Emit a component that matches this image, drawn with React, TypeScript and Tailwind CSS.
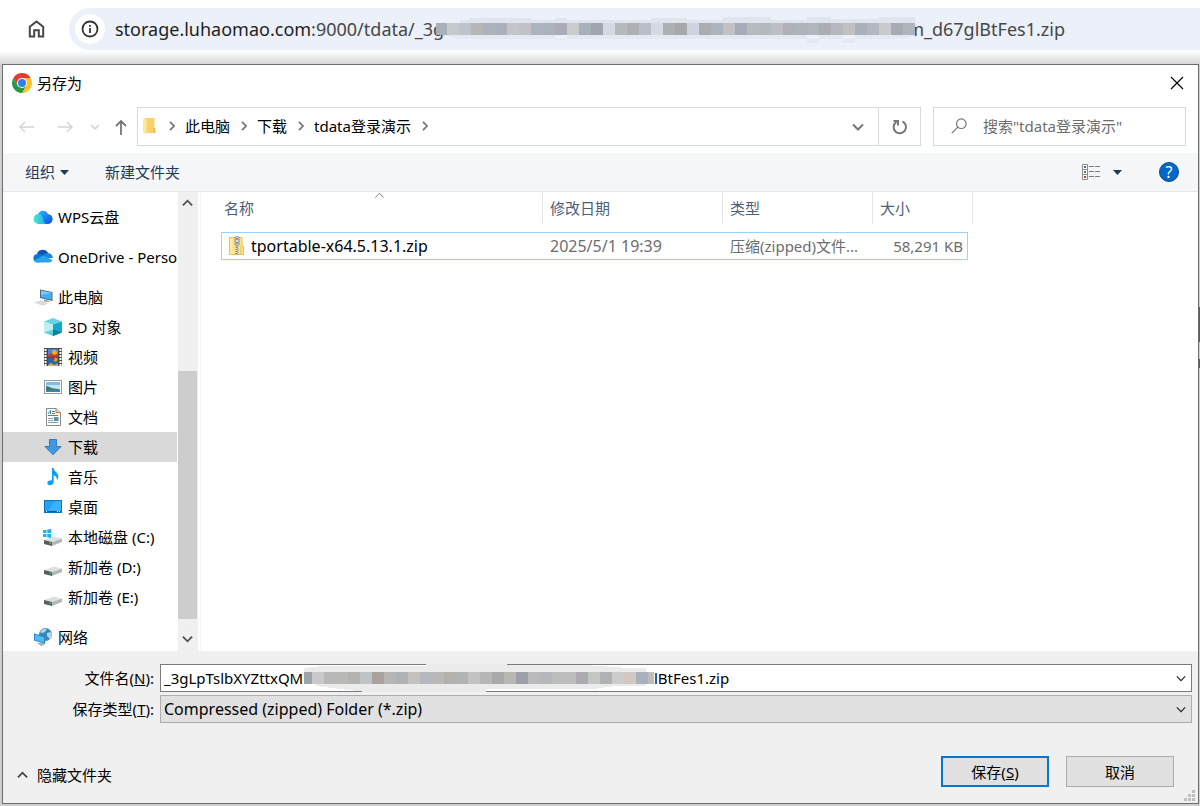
import { useState } from 'react';
import type { ReactNode } from 'react';

interface IconProps {
  className?: string;
}

interface TreeNode {
  label: string;
  icon: ReactNode;
  level: number;
  gap?: boolean;
}

interface MosaicProps {
  colors: string[];
  first: number;
  className?: string;
  children?: ReactNode;
}

function ChromeIcon() {
  return (
    <svg className="size-5 shrink-0" viewBox="0 0 20 20" aria-hidden="true">
      <path d="M1.34 5A10 10 0 0 1 18.66 5L10 5.2 5.67 12.5Z" fill="#e33b2e" />
      <path d="M18.66 5A10 10 0 0 1 10 20L14.33 12.5 10 5Z" fill="#fcc31e" />
      <path d="M1.34 5A10 10 0 0 0 10 20L14.33 12.5 5.67 12.5Z" fill="#279847" />
      <circle cx="10" cy="10" r="5" fill="#fff" />
      <circle cx="10" cy="10" r="4" fill="#2f7de9" />
    </svg>
  );
}

function Chevron({ className }: IconProps) {
  return (
    <svg className={className} viewBox="0 0 12 8" fill="none" stroke="currentColor" aria-hidden="true">
      <path d="M1 1.5 6 6.5 11 1.5" />
    </svg>
  );
}

function CrumbArrow() {
  return (
    <svg
      className="mr-[9px] ml-[10px] h-[10px] w-2 shrink-0 text-[#767676]"
      viewBox="0 0 8 10"
      fill="none"
      stroke="currentColor"
      strokeWidth="1.8"
      aria-hidden="true"
    >
      <path d="M2 .8 6 5 2 9.2" />
    </svg>
  );
}

function FolderIcon() {
  return (
    <svg className="ml-1 h-[18px] w-4 shrink-0" viewBox="0 0 16 18" aria-hidden="true">
      <path d="M2.5 1H12.5V10.5L13 11.5V16H2.5Z" fill="#f7d26b" />
      <path d="M1 1.5 4.5 2.5V17.5L1 15.5Z" fill="#ffe79e" />
      <path d="M11.5 10.5 13.5 11.5V16H11.5Z" fill="#e9bb4c" />
    </svg>
  );
}

function ZipIcon() {
  return (
    <svg className="mr-[6px] h-5 w-4 shrink-0" viewBox="0 0 16 20" aria-hidden="true">
      <path d="M.5 1.5H13V10.5H14.5V18.5H.5Z" fill="#fde38c" stroke="#e9c14b" />
      <path d="M2 2V18" stroke="#fff0b5" />
      <path d="M12 10.5V18" stroke="#eac451" />
      <path d="M7.5 9V19" stroke="#777" strokeDasharray="1 1" strokeWidth="2" />
      <path d="M9 10V19" stroke="#b5b5b5" strokeDasharray="1 1" strokeWidth="2" />
      <rect x="6" y=".5" width="4" height="9" rx="1.5" fill="#dcdcdc" stroke="#8a8a8a" />
      <rect x="7.5" y="2" width="1" height="2" fill="#444" />
      <rect x="7.5" y="6" width="1" height="2" fill="#444" />
    </svg>
  );
}

function WpsIcon() {
  return (
    <svg className="size-5" viewBox="0 0 20 20" aria-hidden="true">
      <defs>
        <linearGradient id="wpsA" x1="0" y1="0" x2="1" y2="1">
          <stop offset="0" stopColor="#2fb4ff" />
          <stop offset="1" stopColor="#0b4fe0" />
        </linearGradient>
        <linearGradient id="wpsB" x1="0" y1="0" x2="1" y2="0">
          <stop offset="0" stopColor="#4be8c8" />
          <stop offset="1" stopColor="#22a9f7" />
        </linearGradient>
      </defs>
      <path d="M5 7.5A5.2 5.2 0 0 1 14.8 7 5 5 0 0 1 14.5 17H6Z" fill="url(#wpsA)" />
      <path d="M5.5 7C8.5 7 9.8 9 10.3 12.5 10.6 15 12 17 14 17H5.5A5 5 0 0 1 5.5 7Z" fill="url(#wpsB)" />
    </svg>
  );
}

function OneDriveIcon() {
  return (
    <svg className="size-5" viewBox="0 0 20 20" aria-hidden="true">
      <path d="M4 7A6 6 0 0 1 15 5.8L11 10Z" fill="#0a58b4" />
      <path d="M4 7C6.5 6 8 7 10 8.5L6 15.5H4.2A4.3 4.3 0 0 1 4 7Z" fill="#0e72cf" />
      <path d="M9.5 8.3 14 6C17 5.5 19.8 8 19.8 11L11 11Z" fill="#1a86dc" />
      <path d="M1 13.5 10 8.5 19.5 13A4 4 0 0 1 16.5 15.5H4.2A4 4 0 0 1 1 13.5Z" fill="#28a4ea" />
    </svg>
  );
}

function ComputerIcon() {
  return (
    <svg className="size-5" viewBox="0 0 20 20" aria-hidden="true">
      <path d="M7 2.5 19.5 5V14L7 11Z" fill="#59656f" />
      <path d="M8 3.7 18.7 5.8V12.8L8 10.2Z" fill="#3fb0fb" />
      <path d="M8 3.7 18.7 5.8 8 8Z" fill="#79cbff" />
      <path d="M11 12.5 15 13.4 17 15 11 14.5Z" fill="#909aa3" />
      <path d="M1 15.5 8 13.5 15 16.5 9.5 18.5Z" fill="#c9ced3" />
      <path d="M3 15.8 10 17.6M6 14.8 12.5 16.7" stroke="#eef0f2" strokeWidth=".7" />
    </svg>
  );
}

function CubeIcon() {
  return (
    <svg className="size-5" viewBox="0 0 20 20" aria-hidden="true">
      <path d="M10 1 19 4.5 10 8 1 4.5Z" fill="#6ad3e2" />
      <path d="M1 4.5 10 7.5V19L1 15.5Z" fill="#bdeef0" />
      <path d="M19 4.5 10 7.5V19L19 15.5Z" fill="#12a8cb" />
      <path d="M1 15.5 10 12.5V19Z" fill="#67cfdc" />
      <path d="M19 15.5 10 12.5V19Z" fill="#0c7ca0" />
    </svg>
  );
}

function VideoIcon() {
  return (
    <svg className="size-5" viewBox="0 0 20 20" aria-hidden="true">
      <rect x="1" y="1" width="18" height="18" fill="#4a4a4a" />
      <path d="M2.5 2V19M17.5 2V19" stroke="#fff" strokeWidth="2" strokeDasharray="2 1" />
      <rect x="5" y="2" width="10" height="8" fill="#4b86de" />
      <rect x="5" y="11" width="10" height="8" fill="#2d62c4" />
      <circle cx="11.5" cy="5.5" r="2.5" fill="#e9b21d" />
      <path d="M5 8 8 6 11 8 15 7V10H5Z" fill="#c93a2b" />
      <circle cx="12.5" cy="12.5" r="2" fill="#d9a51f" />
      <path d="M5 18 8 16 11 18 15 16.5V19H5Z" fill="#d8b32c" />
      <path d="M10.5 9V13" stroke="#b82b22" strokeWidth="2" />
    </svg>
  );
}

function PictureIcon() {
  return (
    <svg className="size-5" viewBox="0 0 20 20" aria-hidden="true">
      <rect x="1.5" y="3.5" width="17" height="13" fill="#fff" stroke="#9a9a9a" />
      <rect x="3" y="5" width="14" height="10" fill="#c4e4f8" />
      <rect x="3" y="5" width="14" height="3" fill="#7dbdec" />
      <path d="M3 9C6 8.5 8 12 12 11.5L17 12.5V15H3Z" fill="#3f7c68" />
      <path d="M3 13.5 17 12.5V15H3Z" fill="#3c82b8" />
    </svg>
  );
}

function DocumentIcon() {
  return (
    <svg className="size-5" viewBox="0 0 20 20" aria-hidden="true">
      <path d="M3.5 1.5H13L17.5 5.5V18.5H3.5Z" fill="#fff" stroke="#888" />
      <path d="M13 1.5V5.5H17.5" fill="#e3e3e3" stroke="#888" />
      <path d="M5 7 7.5 3.5V7M9 4.5H12M9 6.5H12M5 8.5H15" fill="none" stroke="#268fd1" />
      <path d="M5 11.5H10M5 13.5H10M5 15.5H15" stroke="#8c9ba0" />
      <rect x="11" y="10" width="4.5" height="4" fill="#5590ae" />
    </svg>
  );
}

function DownloadIcon() {
  return (
    <svg className="size-5" viewBox="0 0 20 20" aria-hidden="true">
      <path d="M6.5 2.5H13.5V9.5H18L10 17.8 2 9.5H6.5Z" fill="#3f97e6" stroke="#2c7cc8" />
    </svg>
  );
}

function MusicIcon() {
  return (
    <svg className="size-5" viewBox="0 0 20 20" aria-hidden="true">
      <path
        d="M9 1H10.6C10.8 4.5 15.3 5.5 15.3 9.5 15.3 11.2 14.5 12.5 13.8 13.2 14.3 10.5 13 8.8 10.7 8.2V14.5C10.7 17 8.5 18.3 6.8 18.3 5.2 18.3 4.3 17.4 4.3 16.1 4.3 14.3 6.4 13 9 13.4Z"
        fill="#0a9dfb"
      />
    </svg>
  );
}

function DesktopIcon() {
  return (
    <svg className="size-5" viewBox="0 0 20 20" aria-hidden="true">
      <rect x="1.5" y="3.5" width="17" height="12" fill="#1fa4fc" stroke="#1273b8" />
      <path d="M12 4 18 4V14H5Z" fill="#3cb1fd" />
      <path d="M2 14.5H18" stroke="#0b5f9e" />
      <path d="M3 14.5H4M14 14.5H15M16 14.5H17" stroke="#fff" />
    </svg>
  );
}

function DriveIcon({ system = false }: { system?: boolean }) {
  return (
    <svg className="size-5" viewBox="0 0 20 20" aria-hidden="true">
      <path d="M1 13 11 9.5 19 11.5 9 15Z" fill="#dedfe1" />
      <path d="M1 13 9 15V19L1 17Z" fill="#5a5d5f" />
      <path d="M9 15 19 11.5V15L9 19Z" fill="#b4b7ba" />
      <rect x="6.5" y="15.5" width="1.5" height="1.5" fill="#4ac35b" />
      {system && (
        <path
          d="M0 3.2 3.5 2.7V6H0ZM4.3 2.6 8.2 2V6H4.3ZM0 6.9H3.5V10.2L0 9.7ZM4.3 6.9H8.2V10.9L4.3 10.3Z"
          fill="#13b5f4"
        />
      )}
    </svg>
  );
}

function NetworkIcon() {
  return (
    <svg className="size-5" viewBox="0 0 20 20" aria-hidden="true">
      <circle cx="12.5" cy="7.5" r="6.5" fill="#3f87b3" />
      <path d="M7 5C9 2 12 1 14 1.5L12 5 9 6ZM14 6 18 5C19.3 7.5 19 10 17 12L14 9Z" fill="#a9d9ee" />
      <path d="M1 6.5 12 9.5V17L1 13.5Z" fill="#1b7fc6" />
      <path d="M1.8 7.5 11.2 10.2V15.8L1.8 12.9Z" fill="#55b9f6" />
      <path d="M4 16 9 15.8 12 18 8 19Z" fill="#aab1b7" />
    </svg>
  );
}

function Mosaic({ colors, first, className, children }: MosaicProps) {
  return (
    <svg className={className} aria-hidden="true" shapeRendering="crispEdges">
      {children}
      {colors.map((color, i) => (
        <rect
          key={i}
          x={i === 0 ? 0 : first + (i - 1) * 12}
          y="8"
          width={i === 0 ? first : 12}
          height="12"
          fill={color}
        />
      ))}
    </svg>
  );
}

const urlMosaic = [
  '#a9b0bb', '#c7cacd', '#bfc3cb', '#b5b6b8', '#aeb2ba', '#abb0ba', '#c3c5ca', '#c2c2c6',
  '#adb3bf', '#a9b2bd', '#aaadb8', '#c9cccd', '#a8b1ba', '#a2a5ae', '#d5d9e2', '#b6b9be',
  '#adb1b4', '#b9bec7', '#d5d9e3', '#acb0b2', '#a6a8aa', '#ced3dd', '#abacaf', '#acb4be',
  '#c1c2c6', '#a6acb8', '#b7babf', '#b5babf', '#bebfc6', '#b1b0b8', '#aeb4bb', '#b1b6bd',
  '#acaeb4', '#b7b9bf', '#c0c0c3', '#a9b0ba', '#b2b7c0', '#c8cbce', '#a8abb3', '#b0b4bb',
];

const fileMosaic = [
  '#9ea3ad', '#c9c9c9', '#b9b8b7', '#b9b9b8', '#b3b4b0', '#bec3c5', '#aaa29e', '#b7b6b5',
  '#b0b1b3', '#c4c2be', '#b5b8bd', '#bab9b8', '#b2b1ac', '#b1b3b4', '#c2c2c2', '#b7b6b5',
  '#a9a9aa', '#b8b7b3', '#9da0a7', '#bababa', '#b5b7bb', '#bcbdbd', '#bdbdbc', '#adabb0',
  '#c5c7c5', '#afb1b3', '#cccccd', '#d1c8c4', '#abb0bd', '#bebebf', '#b1aea7',
];

const treeNodes: TreeNode[] = [
  { label: 'WPS云盘', icon: <WpsIcon />, level: 0 },
  { label: 'OneDrive - Personal', icon: <OneDriveIcon />, level: 0, gap: true },
  { label: '此电脑', icon: <ComputerIcon />, level: 0, gap: true },
  { label: '3D 对象', icon: <CubeIcon />, level: 1 },
  { label: '视频', icon: <VideoIcon />, level: 1 },
  { label: '图片', icon: <PictureIcon />, level: 1 },
  { label: '文档', icon: <DocumentIcon />, level: 1 },
  { label: '下载', icon: <DownloadIcon />, level: 1 },
  { label: '音乐', icon: <MusicIcon />, level: 1 },
  { label: '桌面', icon: <DesktopIcon />, level: 1 },
  { label: '本地磁盘 (C:)', icon: <DriveIcon system />, level: 1 },
  { label: '新加卷 (D:)', icon: <DriveIcon />, level: 1 },
  { label: '新加卷 (E:)', icon: <DriveIcon />, level: 1 },
  { label: '网络', icon: <NetworkIcon />, level: 0, gap: true },
];

function BrowserBar() {
  return (
    <header className="flex h-[64px] shrink-0 items-start bg-linear-to-b from-white from-80% to-[#d6d6d6] pt-2">
      <a href="#home" aria-label="主页" className="ml-[27px] flex h-[42px] w-[42px] items-center">
        <svg className="size-5" viewBox="0 0 20 20" fill="none" stroke="#474747" strokeWidth="2" aria-hidden="true">
          <path d="M2.8 17.5V7.7L9.5 2.5 16.2 7.7V17.5H11.8V11.3H7.2V17.5Z" />
        </svg>
      </a>
      <div className="flex h-[42px] min-w-0 flex-1 items-center overflow-hidden rounded-l-full bg-[#ebf0f9] pl-[6px]">
        <button
          type="button"
          aria-label="网站信息"
          className="flex size-[30px] shrink-0 items-center justify-center rounded-full bg-white"
        >
          <svg className="size-[18px]" viewBox="0 0 18 18" fill="none" stroke="#333" strokeWidth="1.8" aria-hidden="true">
            <circle cx="9" cy="9" r="7.5" />
            <path d="M9 8V13M9 5V6.8" />
          </svg>
        </button>
        <div className="ml-[10px] flex items-center text-lg leading-7 whitespace-nowrap text-[#474747]">
          <span>
            <span className="text-[#1f1f1f]">storage.luhaomao.com</span>:9000/tdata/_3g
          </span>
          <Mosaic
            colors={urlMosaic}
            first={11}
            className="relative z-10 -mr-2 -ml-2 h-7 w-[479px] shrink-0 overflow-visible"
          >
            <path d="M24 5H33V3H95V5H119V3H131V5H215V3H251V5H287V2H335V5H371V2H395V4H443V2H479V8H24Z" fill="#e0e4ec" />
            <path d="M6 20H119V25H131V20H371V28H383V20H407V28H419V20H479V22L455 24H22Z" fill="#e3e8f1" />
          </Mosaic>
          <span>m_d67glBtFes1.zip</span>
        </div>
      </div>
    </header>
  );
}

function AddressRow() {
  return (
    <div className="flex h-[46px] items-start pr-3">
      <div className="flex h-[39px] w-[134px] shrink-0 items-center pl-4 text-[#d3d3d3]">
        <button type="button" aria-label="后退" disabled>
          <svg className="h-3 w-4" viewBox="0 0 16 12" fill="none" stroke="currentColor" strokeWidth="1.5" aria-hidden="true">
            <path d="M6 1 1 6 6 11M1 6H15" />
          </svg>
        </button>
        <button type="button" aria-label="前进" disabled className="ml-[22px]">
          <svg className="h-3 w-4" viewBox="0 0 16 12" fill="none" stroke="currentColor" strokeWidth="1.5" aria-hidden="true">
            <path d="M10 1 15 6 10 11M15 6H1" />
          </svg>
        </button>
        <button type="button" aria-label="最近浏览的位置" disabled className="ml-[17px]">
          <Chevron className="h-[6px] w-[10px] stroke-2" />
        </button>
        <button type="button" aria-label="上移" className="ml-[14px] text-[#767676]">
          <svg className="h-4 w-[14px]" viewBox="0 0 14 16" fill="none" stroke="currentColor" strokeWidth="1.8" aria-hidden="true">
            <path d="M2 7 7 2 12 7M7 2V16" />
          </svg>
        </button>
      </div>
      <div className="flex h-[39px] min-w-0 flex-1 items-center border border-[#d9d9d9]">
        <nav className="flex min-w-0 items-center pb-[2px] whitespace-nowrap">
          <FolderIcon />
          <CrumbArrow />
          <a href="#pc">此电脑</a>
          <CrumbArrow />
          <a href="#downloads">下载</a>
          <CrumbArrow />
          <a href="#tdata">tdata登录演示</a>
          <CrumbArrow />
        </nav>
        <button type="button" aria-label="历史记录" className="mr-[14px] ml-auto text-[#767676]">
          <Chevron className="h-2 w-3 stroke-2" />
        </button>
        <button
          type="button"
          aria-label="刷新"
          className="flex h-full w-[42px] items-center justify-center border-l border-[#d9d9d9] text-[#767676]"
        >
          <svg className="size-4" viewBox="0 0 16 16" fill="none" stroke="currentColor" strokeWidth="2" aria-hidden="true">
            <path d="M10.5 2.5A6.2 6.2 0 1 1 4.3 3M1.5 2H6V6.5" />
          </svg>
        </button>
      </div>
      <label className="ml-3 flex h-[39px] w-[253px] shrink-0 items-center border border-[#d9d9d9] pb-[2px] pl-[17px]">
        <svg className="h-4 w-4 shrink-0 text-[#767676]" viewBox="0 0 16 16" fill="none" stroke="currentColor" strokeWidth="1.2" aria-hidden="true">
          <circle cx="10.3" cy="5.7" r="4.8" />
          <path d="M6.8 9.2.8 15.2" />
        </svg>
        <input
          type="search"
          aria-label="搜索"
          placeholder={'搜索"tdata登录演示"'}
          className="ml-4 w-full min-w-0 bg-transparent outline-none placeholder:text-[#6d6d6d]"
        />
      </label>
    </div>
  );
}

function Toolbar() {
  return (
    <div className="flex h-[39px] items-center border-b border-[#e5e7ea] bg-[#f4f6f8] pr-[19px] pl-[22px] text-[#1e395b]">
      <button type="button" className="flex items-center gap-[5px]">
        组织
        <svg className="h-[5px] w-[9px]" viewBox="0 0 9 5" fill="currentColor" aria-hidden="true">
          <path d="M0 0H9L4.5 5Z" />
        </svg>
      </button>
      <button type="button" className="ml-9">
        新建文件夹
      </button>
      <button type="button" aria-label="更改您的视图" className="ml-auto flex items-center gap-3">
        <svg className="h-4 w-[19px]" viewBox="0 0 19 16" fill="none" aria-hidden="true">
          <path d="M.5.5H5.5V15.5H.5ZM.5 5.5H5.5M.5 10.5H5.5" fill="#fff" stroke="#8b8b8b" />
          <path d="M7 2.5H12M13 2.5H18M7 7.5H12M13 7.5H18M7 12.5H12M13 12.5H18" stroke="#7d7d7d" />
          <rect x="2" y="2" width="2" height="2" fill="#3572b0" />
          <rect x="2" y="7" width="2" height="2" fill="#6b7a3a" />
          <rect x="2" y="12" width="2" height="2" fill="#d0392b" />
        </svg>
        <svg className="h-[5px] w-[9px]" viewBox="0 0 9 5" fill="currentColor" aria-hidden="true">
          <path d="M0 0H9L4.5 5Z" />
        </svg>
      </button>
      <button
        type="button"
        aria-label="获取帮助"
        className="ml-[37px] flex size-5 items-center justify-center rounded-full border border-[#0b4a8c] bg-[#0567c8] text-base leading-5 text-white"
      >
        ?
      </button>
    </div>
  );
}

function FolderTree() {
  const [selected, setSelected] = useState('下载');

  return (
    <aside className="flex w-[198px] shrink-0 border-r border-[#f3f3f3]">
      <ul className="-mb-px w-[174px] shrink-0 overflow-hidden pt-[10px]">
        {treeNodes.map(node => (
          <li key={node.label} className={node.gap ? 'mt-[10px]' : ''}>
            <button
              type="button"
              onClick={() => setSelected(node.label)}
              className={`flex h-[30px] w-full items-center gap-[5px] overflow-hidden text-left whitespace-nowrap ${
                node.level === 0 ? 'pl-[30px]' : 'pl-10'
              } ${selected === node.label ? 'bg-[#d9d9d9]' : ''}`}
            >
              <span className="shrink-0">{node.icon}</span>
              {node.label}
            </button>
          </li>
        ))}
      </ul>
      {/* 滚动条 */}
      <div className="ml-px flex w-5 flex-col items-center bg-[#f0f0f0] pr-px text-[#505050]">
        <Chevron className="mt-[7px] h-2 w-[11px] rotate-180 stroke-2" />
        <div className="mt-[164px] mb-4 w-full flex-1 bg-[#cdcdcd]" />
        <Chevron className="mb-2 h-2 w-[11px] stroke-2" />
      </div>
    </aside>
  );
}

function FileTable() {
  return (
    <main className="min-w-0 flex-1 pl-5">
      <table className="w-[752px] table-fixed border-separate border-spacing-0 text-left">
        <thead className="text-[#4c607a]">
          <tr>
            <th className="relative h-8 w-[322px] border-r border-[#e5e5e5] p-0 pl-[3px] font-normal">
              名称
              <Chevron className="absolute top-0 left-[153px] h-[7px] w-[11px] rotate-180 text-[#6d6d6d]" />
            </th>
            <th className="w-[180px] border-r border-[#e5e5e5] p-0 pl-[7px] font-normal">修改日期</th>
            <th className="w-[150px] border-r border-[#e5e5e5] p-0 pl-[7px] font-normal">类型</th>
            <th className="w-[100px] border-r border-[#e5e5e5] p-0 pl-[7px] font-normal">大小</th>
          </tr>
        </thead>
        <tbody className="text-[#6d6d6d]">
          <tr>
            <td className="p-0 pt-2">
              <div className="flex h-7 items-center border-y border-l border-[#99d1ff] pl-[7px] text-base leading-5 text-black">
                <ZipIcon />
                tportable-x64.5.13.1.zip
              </div>
            </td>
            <td className="p-0 pt-2">
              <div className="flex h-7 items-center border-y border-[#99d1ff] pl-[7px] text-base leading-5">
                2025/5/1 19:39
              </div>
            </td>
            <td className="p-0 pt-2">
              <div className="flex h-7 items-center border-y border-[#99d1ff] pl-[7px]">压缩(zipped)文件...</div>
            </td>
            <td className="p-0 pt-2">
              <div className="mr-[5px] flex h-7 items-center justify-end border-y border-r border-[#99d1ff] pr-1 whitespace-nowrap">
                58,291 KB
              </div>
            </td>
          </tr>
        </tbody>
      </table>
    </main>
  );
}

function SaveForm() {
  const [prefix, setPrefix] = useState('_3gLpTslbXYZttxQM');
  const [suffix, setSuffix] = useState('lBtFes1.zip');

  return (
    <form className="relative shrink-0 bg-[#f0f0f0] pt-[13px]" onSubmit={e => e.preventDefault()}>
      <div className="flex items-center pr-[6px]">
        <label htmlFor="file-name" className="w-[157px] shrink-0 pr-[6px] text-right">
          文件名(<u>N</u>):
        </label>
        <div className="flex h-7 min-w-0 flex-1 items-center border border-[#7a7a7a] bg-white">
          <input
            id="file-name"
            value={prefix}
            onChange={e => setPrefix(e.target.value)}
            className="w-[151px] shrink-0 bg-transparent pl-[3px] outline-none"
          />
          <Mosaic colors={fileMosaic} first={8} className="relative z-10 -ml-2 h-7 w-[350px] shrink-0">
            <path d="M0 4 18 2H122V0H203V1H280L326 4H342V22H310L290 25H182V28H62L12 22V20H0Z" fill="#ebebeb" />
          </Mosaic>
          <input
            aria-label="文件名后缀"
            value={suffix}
            onChange={e => setSuffix(e.target.value)}
            className="min-w-0 flex-1 bg-transparent outline-none"
          />
          <button type="button" aria-label="展开文件名" className="mr-[5px] text-[#222]">
            <Chevron className="h-[7px] w-[10px] stroke-[1.4]" />
          </button>
        </div>
      </div>
      <div className="mt-[3px] flex items-center pr-[6px]">
        <label htmlFor="file-type" className="w-[157px] shrink-0 pr-[6px] text-right">
          保存类型(<u>T</u>):
        </label>
        <div className="relative h-7 min-w-0 flex-1">
          <select
            id="file-type"
            className="h-7 w-full appearance-none border border-[#adadad] bg-[#e1e1e1] pl-[3px] text-base leading-5 outline-none"
          >
            <option>Compressed (zipped) Folder (*.zip)</option>
          </select>
          <Chevron className="pointer-events-none absolute top-[11px] right-[6px] h-[7px] w-[10px] stroke-[1.4] text-[#222]" />
        </div>
      </div>
      <div className="mt-[33px] flex h-[47px] items-start pr-[3px]">
        <button type="button" className="mt-[9px] ml-[14px] flex items-center gap-[9px]">
          <Chevron className="h-2 w-[11px] rotate-180 stroke-2 text-[#444]" />
          隐藏文件夹
        </button>
        <button type="submit" className="ml-auto h-[31px] w-[108px] border-2 border-[#0078d7] bg-[#e1e1e1]">
          保存(<u>S</u>)
        </button>
        <button type="button" className="ml-[17px] h-[31px] w-[108px] border border-[#adadad] bg-[#e1e1e1]">
          取消
        </button>
        <svg className="mt-auto mb-[2px] ml-[10px] size-[11px]" viewBox="0 0 11 11" fill="#bfbfbf" aria-hidden="true">
          <path d="M8 0h3v3h-3ZM4 4h3v3h-3ZM8 4h3v3h-3ZM0 8h3v3h-3ZM4 8h3v3h-3ZM8 8h3v3h-3Z" />
        </svg>
      </div>
    </form>
  );
}

export default function App() {
  return (
    <div className="flex min-h-screen flex-col bg-[#cfcfcf] pb-[2px] font-['Noto_Sans','Noto_Sans_CJK_SC',sans-serif] text-[15px] leading-5 text-black">
      <BrowserBar />
      <div className="flex flex-1 pl-[2px]">
        <section
          role="dialog"
          aria-labelledby="dialog-title"
          className="flex min-w-0 flex-1 flex-col border border-[#6e6e6e] bg-white"
        >
          <div className="flex h-[42px] shrink-0 items-start pr-[14px] pl-[9px]">
            <div className="flex h-9 flex-1 items-center gap-[5px]">
              <ChromeIcon />
              <h1 id="dialog-title">另存为</h1>
            </div>
            <button type="button" aria-label="关闭" className="flex h-9 items-center">
              <svg className="size-[14px]" viewBox="0 0 14 14" stroke="#000" strokeWidth="1.2" aria-hidden="true">
                <path d="M1 1 13 13M13 1 1 13" />
              </svg>
            </button>
          </div>
          <AddressRow />
          <Toolbar />
          <div className="flex flex-1">
            <FolderTree />
            <FileTable />
          </div>
          <SaveForm />
        </section>
        {/* 对话框后面露出的页面边缘 */}
        <div className="w-px shrink-0 pt-[243px]">
          <div className="h-[35px] bg-[#2f62b5]" />
          <div className="mt-[17px] h-[9px] bg-[#2f62b5]" />
        </div>
      </div>
    </div>
  );
}
